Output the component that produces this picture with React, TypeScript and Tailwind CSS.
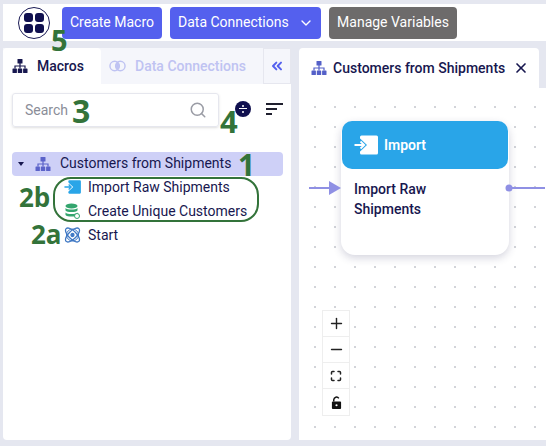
import { ChevronDown, ChevronsLeft, Maximize, Minus, Plus, Search, X } from 'lucide-react';

function HierarchyIcon({ className }: { className: string }) {
  return (
    <svg viewBox="0 0 16 16" className={className} fill="currentColor">
      <rect x="5.5" y="1" width="5" height="4.5" rx="0.6" />
      <rect x="0.5" y="10.5" width="4.4" height="4.5" rx="0.6" />
      <rect x="5.8" y="10.5" width="4.4" height="4.5" rx="0.6" />
      <rect x="11.1" y="10.5" width="4.4" height="4.5" rx="0.6" />
      <path d="M7.4 5h1.2v2.4h5v3.2h-1.2V8.6H8.6v2H7.4v-2H3.6v2H2.4V7.4h5z" />
    </svg>
  );
}

// box with a notch on the left, the arrow sits in the notch
function ImportIcon({ color, cut, className }: { color: string; cut: string; className: string }) {
  return (
    <svg viewBox="0 0 24 20" className={className}>
      <rect x="6" y="0.5" width="18" height="19" rx="1.500" fill={color} />
      <path d="M5 2.500 13 10 5 17.500z" fill={cut} />
      <path d="M0.500 10h9.500M6.500 6.500 10.200 10 6.500 13.500" fill="none" stroke={color} strokeWidth="1.800" />
    </svg>
  );
}

function AppsIcon() {
  return (
    <div className="flex h-8 w-8 items-center justify-center rounded-full border border-[#1a1a55] bg-white">
      <div className="grid grid-cols-2 gap-[2px]">
        <div className="h-[9px] w-[9px] rounded-[3px] bg-[#10104f]" />
        <div className="h-[9px] w-[9px] rounded-[3px] bg-[#10104f]" />
        <div className="h-[9px] w-[9px] rounded-[3px] bg-[#10104f]" />
        <div className="h-[9px] w-[9px] rounded-[3px] bg-[#10104f]" />
      </div>
    </div>
  );
}

function TopBar() {
  return (
    <div className="ml-[3px] mt-1 flex h-[37px] items-center gap-2 bg-white pl-[15px]">
      <div className="mr-1">
        <AppsIcon />
      </div>
      <button className="h-8 w-[100px] rounded bg-[#5460ee] text-[14px] text-white">Create Macro</button>
      <button className="flex h-8 w-[151px] items-center gap-[9px] rounded bg-[#5460ee] pl-2 text-[14px] text-white">
        Data Connections
        <ChevronDown className="h-4 w-4" />
      </button>
      <button className="h-8 w-[128px] rounded bg-[#6d6b6b] text-[14px] text-white">Manage Variables</button>
    </div>
  );
}

function LeftPanel() {
  return (
    <div className="h-[392px] w-[288px] rounded-b bg-white">
      <div className="flex h-9 bg-[#f5f6fb]">
        <div className="flex w-[98px] items-center gap-[9px] rounded-t bg-white pl-[9px] text-[14px] font-medium text-[#17174f]">
          <HierarchyIcon className="h-4 w-4 text-[#17174f]" />
          Macros
        </div>
        <div className="flex w-[162px] items-center gap-[9px] pl-[8px] text-[14px] font-medium text-[#bfc3f2]">
          <svg viewBox="0 0 18 12" className="h-3 w-[17px]" fill="none" stroke="#bfc3f2" strokeWidth="1.500">
            <circle cx="6" cy="6" r="5" />
            <circle cx="12" cy="6" r="5" />
            <path d="M9 2.500a5 5 0 0 1 0 7 5 5 0 0 1 0-7z" fill="#bfc3f2" />
          </svg>
          Data Connections
        </div>
        <div className="flex w-7 items-center justify-center border border-[#e6e7ef] bg-[#f5f6fb]">
          <ChevronsLeft className="h-4 w-4 text-[#5460ee]" strokeWidth={3} />
        </div>
      </div>
      <div className="flex items-center pl-[9px] pt-[9px]">
        <div className="flex h-[34px] w-[207px] items-center justify-between rounded-[3px] border border-[#e6e7ee] pl-3 pr-[11px] shadow-sm">
          <span className="text-[14px] text-[#8a8d98]">Search</span>
          <Search className="h-[18px] w-[18px] text-[#9a9ca5]" />
        </div>
        <div className="ml-4 -mt-[3px] flex h-4 w-4 flex-col items-center justify-center gap-[1.500px] rounded-full bg-[#10104f]">
          <div className="h-[2px] w-[2px] rounded-full bg-white" />
          <div className="h-px w-2 bg-white" />
          <div className="h-[2px] w-[2px] rounded-full bg-white" />
        </div>
        <div className="ml-[15px] -mt-[3px] flex flex-col gap-[3px]">
          <div className="h-[2px] w-[17px] bg-[#1f1f2e]" />
          <div className="h-[2px] w-[11px] bg-[#1f1f2e]" />
          <div className="h-[2px] w-[6px] bg-[#1f1f2e]" />
        </div>
      </div>
      <div className="pl-[9px] pt-[25px]">
        <div className="flex h-6 w-[271px] items-center rounded bg-[#ced0f7] pb-px pl-[6px] text-[14px] text-[#17174f]">
          <div className="h-0 w-0 border-x-[3px] border-t-[4px] border-x-transparent border-t-[#17174f]" />
          <HierarchyIcon className="ml-[11px] h-4 w-4 text-[#5b62c9]" />
          <span className="ml-[9px]">Customers from Shipments</span>
        </div>
        <div className="-mt-px flex h-6 items-center pl-[52px] text-[14px] text-[#17174f]">
          <ImportIcon color="#29a5e8" cut="#ffffff" className="h-[14px] w-[17px]" />
          <span className="ml-[7px]">Import Raw Shipments</span>
        </div>
        <div className="flex h-6 items-center pl-[52px] text-[14px] text-[#17174f]">
          <svg viewBox="0 0 16 16" className="h-4 w-[17px]">
            <ellipse cx="7" cy="3" rx="6" ry="2.500" fill="#34a56e" />
            <path d="M1 5c1.500 2 10.500 2 12 0v2.500c-1.500 2-10.500 2-12 0z" fill="#34a56e" />
            <path d="M1 9.500c1.500 2 10.500 2 12 0V12c-1.500 2-10.500 2-12 0z" fill="#34a56e" />
            <circle cx="12.500" cy="13" r="2.500" fill="#fff" stroke="#34a56e" />
          </svg>
          <span className="ml-[7px]">Create Unique Customers</span>
        </div>
        <div className="flex h-6 items-center pl-[52px] text-[14px] text-[#17174f]">
          <svg viewBox="0 0 16 16" className="h-4 w-[17px]" fill="none" stroke="#3f78c4" strokeWidth="1.300">
            <ellipse cx="8" cy="8" rx="9" ry="4" transform="rotate(45 8 8)" />
            <ellipse cx="8" cy="8" rx="9" ry="4" transform="rotate(-45 8 8)" />
            <circle cx="8" cy="8" r="6" strokeWidth="1" />
            <circle cx="8" cy="8" r="1.500" fill="#3f78c4" />
          </svg>
          <span className="ml-[7px]">Start</span>
        </div>
      </div>
    </div>
  );
}

function ControlButton({ children }: { children: React.ReactNode }) {
  return <div className="flex h-[26px] items-center justify-center border-b border-[#eeeeee] last:border-b-0">{children}</div>;
}

function Canvas() {
  return (
    <div className="relative h-[352px] bg-white bg-[radial-gradient(circle,#d2d4d9_1px,transparent_1px)] bg-[size:20px_20px] bg-[position:6px_9px]">
      <div className="absolute left-[42px] top-[33px] h-[134px] w-[168px] rounded-[14px] bg-white shadow-[0_3px_8px_rgba(40,40,90,0.2)]">
        <div className="mx-px flex h-12 items-center gap-[6px] rounded-[10px] bg-[#29a5e8] pl-3 text-[14px] font-semibold text-white">
          <ImportIcon color="#ffffff" cut="#29a5e8" className="h-5 w-6" />
          Import
        </div>
        <div className="pl-[13px] pt-[10px] text-[14px] font-medium leading-5 text-[#17174f]">
          Import Raw
          <br />
          Shipments
        </div>
      </div>
      <svg viewBox="0 0 34 14" className="absolute left-[10px] top-[93px] h-[14px] w-[34px]">
        <path d="M0 7h22" stroke="#8f90e4" strokeWidth="2" />
        <path d="M20 0l12 7-12 7z" fill="#8f90e4" />
      </svg>
      <svg viewBox="0 0 40 10" className="absolute left-[206px] top-[95px] h-[10px] w-[40px]">
        <circle cx="4" cy="5" r="3.500" fill="#8f90e4" />
        <path d="M4 5h36" stroke="#8f90e4" strokeWidth="2" />
      </svg>
      <div className="absolute left-[23px] top-[222px] w-7 border border-[#eeeeee] bg-white">
        <ControlButton><Plus className="h-[17px] w-[17px] text-[#222]" /></ControlButton>
        <ControlButton><Minus className="h-[17px] w-[17px] text-[#222]" /></ControlButton>
        <ControlButton><Maximize className="h-3 w-3 text-[#222]" strokeWidth={3} /></ControlButton>
        <ControlButton>
          <svg viewBox="0 0 12 14" className="h-[13px] w-[11px]">
            <path d="M3 6V4a3 3 0 0 1 5.500-1.500" fill="none" stroke="#111" strokeWidth="1.600" />
            <rect x="1" y="6" width="10" height="8" rx="1" fill="#111" />
            <circle cx="6" cy="10" r="1.200" fill="#fff" />
          </svg>
        </ControlButton>
      </div>
    </div>
  );
}

function RightPanel() {
  return (
    <div className="flex-1">
      <div className="flex h-10 w-[240px] items-center rounded-t bg-white pl-3 text-[14px] font-medium text-[#17174f]">
        <HierarchyIcon className="h-4 w-4 text-[#5460c8]" />
        <span className="ml-[6px]">Customers from Shipments</span>
        <X className="ml-2 h-4 w-4 text-[#17174f]" strokeWidth={2.500} />
      </div>
      <Canvas />
    </div>
  );
}

function Annotations() {
  const green = 'absolute font-bold leading-none text-[#33733a]';
  return (
    <div className="font-['Open_Sans',sans-serif]">
      <span className={`${green} left-[51px] top-[25px] text-[29px]`}>5</span>
      <span className={`${green} left-[72px] top-[95px] text-[32px]`}>3</span>
      <span className={`${green} left-[220px] top-[106px] text-[31px]`}>4</span>
      <span className={`${green} left-[238px] top-[150px] text-[30px]`}>1</span>
      <span className={`${green} left-[19px] top-[184px] text-[26px]`}>2b</span>
      <span className={`${green} left-[31px] top-[221px] text-[26px]`}>2a</span>
      <div className="absolute left-[53px] top-[177px] h-[45px] w-[206px] rounded-[18px] border-[2.500px] border-[#33733a]" />
    </div>
  );
}

export default function App() {
  return (
    <div className="relative h-[446px] w-[546px] overflow-hidden bg-[#e5e7f0] font-['Roboto',sans-serif]">
      <TopBar />
      <div className="ml-[3px] mt-[7px] flex gap-2">
        <LeftPanel />
        <RightPanel />
      </div>
      <Annotations />
    </div>
  );
}
